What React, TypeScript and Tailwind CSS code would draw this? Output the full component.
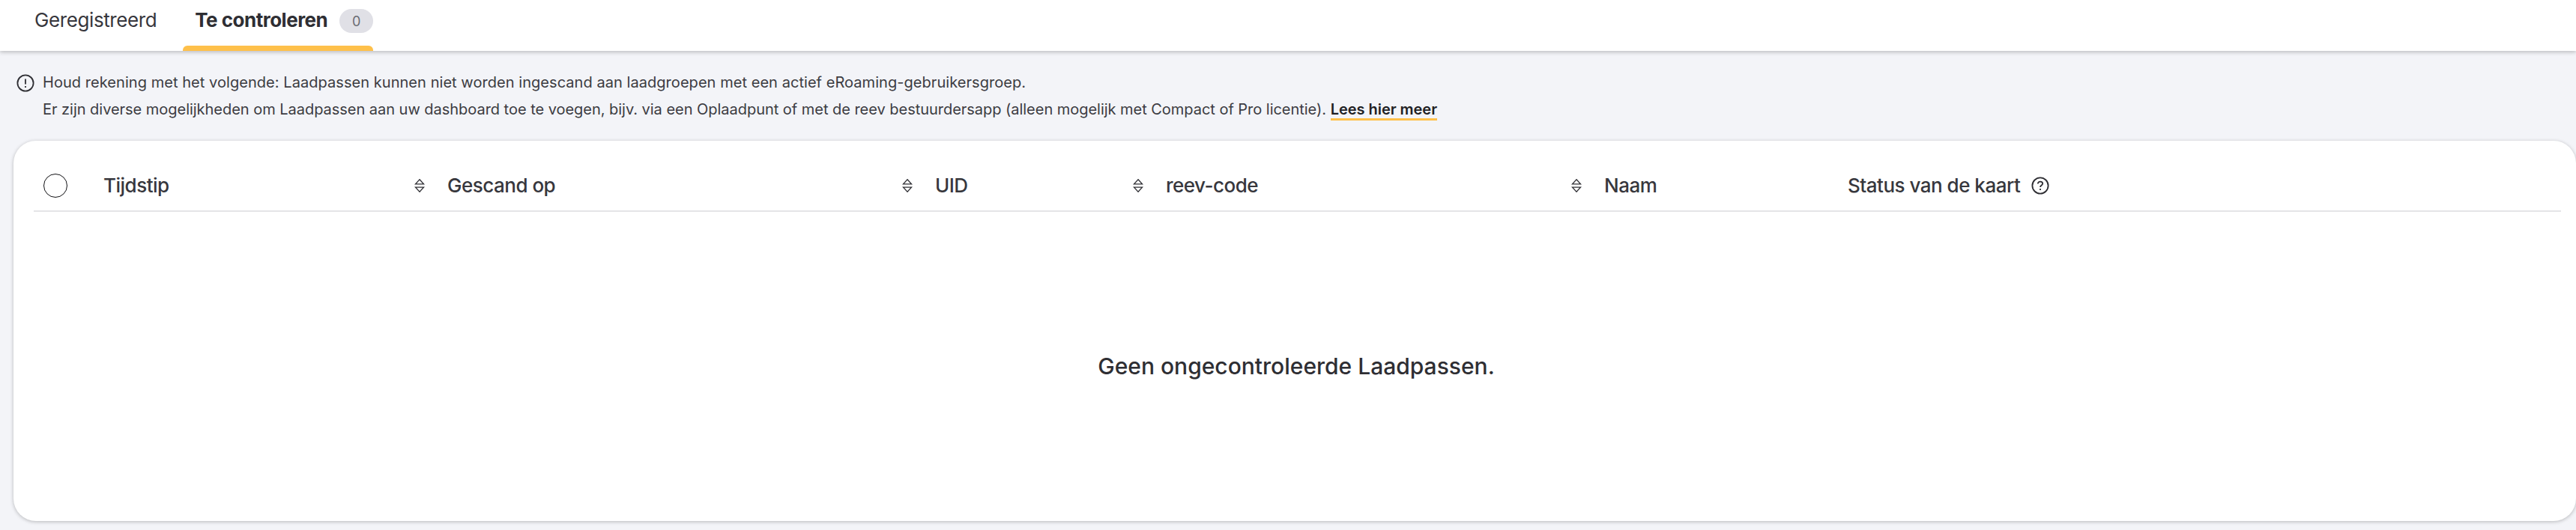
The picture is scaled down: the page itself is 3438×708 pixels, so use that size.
const font = { fontFamily: '"Inter", "Noto Sans", sans-serif' }

function SortIcon() {
  return (
    <svg width="16" height="18" viewBox="0 0 16 18" fill="none" stroke="#2e2e33" strokeWidth="1.3">
      <path d="M8 0.8 L13.5 6.8 H2.5 Z" />
      <path d="M8 17.2 L13.5 11.2 H2.5 Z" />
    </svg>
  )
}

function HeadCell({ label, sortable = true }: { label: string; sortable?: boolean }) {
  return (
    <div className="flex items-center justify-between pr-[29px]">
      <span className="text-[26px] font-medium tracking-[-0.5px] text-[#37373d]">{label}</span>
      {sortable && <SortIcon />}
    </div>
  )
}

export default function App() {
  return (
    <div style={font} className="h-[708px] w-[3438px] overflow-hidden bg-[#f3f4f8] text-[#2e2e33]">
      <div className="relative z-10 flex h-[68px] items-start bg-white pl-[46px] shadow-[0_2px_5px_rgba(0,0,0,0.22)]">
        <div className="pt-[8px] text-[26px] leading-[38px] tracking-[-0.4px] text-[#37373d]">Geregistreerd</div>
        <div className="ml-[35px] flex h-[68px] flex-col justify-between">
          <div className="flex items-start pl-[16px] pt-[8px]">
            <span className="text-[26px] font-bold leading-[38px] tracking-[-0.5px]">Te controleren</span>
            <span className="ml-[16px] mt-[4px] flex h-[32px] w-[45px] items-center justify-center rounded-full bg-[#e0e0e6] text-[18px] text-[#6b6b72]">0</span>
          </div>
          <div className="h-[7px] rounded-t-[6px] bg-[#fec04a]" />
        </div>
      </div>

      <div className="flex pl-[22px] pt-[24px] text-[20px] leading-[36px] text-[#3c3c42]">
        <svg className="mt-[7px] mr-[11px] shrink-0" width="24" height="24" viewBox="0 0 24 24" fill="none" stroke="#2e2e33" strokeWidth="1.8">
          <circle cx="12" cy="12" r="10.6" />
          <path d="M12 6.5 V13.5" />
          <path d="M12 16 V18" />
        </svg>
        <div>
          <div className="tracking-[0.05px]">Houd rekening met het volgende: Laadpassen kunnen niet worden ingescand aan laadgroepen met een actief eRoaming-gebruikersgroep.</div>
          <div className="tracking-[-0.03px]">
            Er zijn diverse mogelijkheden om Laadpassen aan uw dashboard toe te voegen, bijv. via een Oplaadpunt of met de reev bestuurdersapp (alleen mogelijk met Compact of Pro licentie).{" "}
            <span className="border-b-[3px] border-[#fec04a] font-semibold text-[#1f1f24]">Lees hier meer</span>
          </div>
        </div>
      </div>

      <div className="ml-[18px] mt-[24px] h-[508px] rounded-[30px] bg-white shadow-[0_1px_5px_rgba(0,0,0,0.25)]">
        <div className="ml-[27px] mr-[20px] grid h-[95px] grid-cols-[93px_459px_651px_308px_585px_325px_1fr] items-center border-b-2 border-[#e4e4e7] pt-[34px] pb-[8px]">
          <div className="ml-[13px] h-[32px] w-[32px] rounded-full border border-[#111114]" />
          <HeadCell label="Tijdstip" />
          <HeadCell label="Gescand op" />
          <HeadCell label="UID" />
          <HeadCell label="reev-code" />
          <HeadCell label="Naam" sortable={false} />
          <div className="flex items-center gap-[15px]">
            <span className="text-[26px] font-medium tracking-[-0.5px] text-[#37373d]">Status van de kaart</span>
            <svg width="24" height="24" viewBox="0 0 24 24" fill="none" stroke="#2e2e33" strokeWidth="1.8">
              <circle cx="12" cy="12" r="10.6" />
              <path d="M8.8 9.5 C8.8 7.7 10.2 6.6 12 6.6 C13.8 6.6 15.2 7.7 15.2 9.3 C15.2 11.4 12 11.6 12 14" />
              <path d="M12 16 V18" />
            </svg>
          </div>
        </div>
        <div className="flex h-[413px] items-center justify-center pl-[4px] text-[30px] font-medium text-[#2e2e33]">
          Geen ongecontroleerde Laadpassen.
        </div>
      </div>
    </div>
  )
}
